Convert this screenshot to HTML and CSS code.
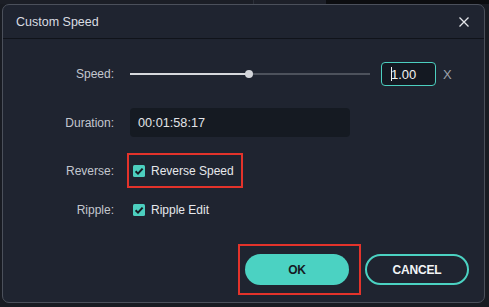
FILE: index.html
```html
<!DOCTYPE html>
<html>
<head>
<meta charset="utf-8">
<link rel="stylesheet" href="styles.css">
</head>
<body>
<div class="backdrop">
  <div class="topstrip"><span class="seg-a"></span><span class="seg-b"></span><span class="seg-c"></span></div>
  <div class="dialog">
    <div class="titlebar">
      <span class="title">Custom Speed</span>
      <svg class="close" width="10" height="10" viewBox="0 0 10 10"><path d="M0.5 0.5 L9.5 9.5 M9.5 0.5 L0.5 9.5" stroke="#e4e6ea" stroke-width="1.3" fill="none"/></svg>
    </div>
    <div class="body">
      <div class="row row-speed">
        <div class="label">Speed:</div>
        <div class="ctrl">
          <div class="slider">
            <div class="fill" style="width:49.6%"></div>
            <div class="knob" style="left:49.6%"></div>
          </div>
          <div class="num"><span class="caret"></span>1.00</div>
          <span class="mult">X</span>
        </div>
      </div>
      <div class="row row-dur">
        <div class="label">Duration:</div>
        <div class="ctrl">
          <div class="dur">00:01:58:17</div>
        </div>
      </div>
      <div class="row row-rev">
        <div class="label">Reverse:</div>
        <div class="ctrl ctrl-rev">
          <div class="hl hl-rev">
            <span class="check"><svg width="12" height="12" viewBox="0 0 12 12"><path d="M2.6 6.2 L5 8.6 L9.6 3.6" stroke="#151a22" stroke-width="2" fill="none"/></svg></span>
            <span class="cbtext">Reverse Speed</span>
          </div>
        </div>
      </div>
      <div class="row row-rip">
        <div class="label">Ripple:</div>
        <div class="ctrl ctrl-rip">
          <span class="check"><svg width="12" height="12" viewBox="0 0 12 12"><path d="M2.6 6.2 L5 8.6 L9.6 3.6" stroke="#151a22" stroke-width="2" fill="none"/></svg></span>
          <span class="cbtext">Ripple Edit</span>
        </div>
      </div>
      <div class="footer">
        <div class="hl hl-ok"><button class="btn btn-ok">OK</button></div>
        <button class="btn btn-cancel">CANCEL</button>
      </div>
    </div>
  </div>
</div>
</body>
</html>
```

FILE: styles.css
```css
* { box-sizing: border-box; }
html, body { margin: 0; padding: 0; }
body {
  width: 489px;
  height: 307px;
  overflow: hidden;
  background: #181b22;
  font-family: "Liberation Sans", Arial, sans-serif;
  font-size: 12px;
}
.backdrop { position: relative; width: 489px; height: 307px; }
.topstrip {
  display: flex;
  height: 4px;
}
.seg-a { width: 253px; background: #1b1e26; }
.seg-b { width: 73px; background: #1d2029; border-left: 1px solid #2c3039; }
.seg-c { flex: 1; background: #0c0d10; }
.dialog {
  margin-left: 2px;
  width: 483px;
  height: 299px;
  background: #1f2430;
  border: 1px solid #4b505b;
  border-radius: 7px;
  display: flex;
  flex-direction: column;
}
.titlebar {
  height: 34px;
  flex: none;
  display: flex;
  align-items: center;
  justify-content: space-between;
  padding: 0 15px 0 13px;
  border-bottom: 1px solid #10131a;
}
.title { color: #d9dce2; font-size: 12.5px; }
.close { display: block; }
.body {
  padding-top: 23px;
  display: flex;
  flex-direction: column;
}
.row {
  display: flex;
  align-items: center;
}
.label {
  width: 112px;
  flex: none;
  text-align: right;
  color: #c3c7cf;
  padding-right: 1px;
}
.ctrl {
  margin-left: 15px;
  display: flex;
  align-items: center;
}
.row-speed { height: 24px; }
.slider {
  position: relative;
  width: 240px;
  height: 2px;
  background: #4d525c;
  margin-right: 11px;
}
.fill {
  height: 2px;
  background: #d6d8dc;
}
.knob {
  position: absolute;
  top: -3px;
  width: 8px;
  height: 8px;
  margin-left: -4px;
  border-radius: 50%;
  background: #d3d5da;
}
.num {
  width: 55px;
  height: 24px;
  border: 1px solid #4ccfbf;
  border-radius: 4px;
  background: #141922;
  color: #f2f2f2;
  font-size: 13px;
  display: flex;
  align-items: center;
  padding-left: 9px;
}
.caret {
  display: inline-block;
  width: 1px;
  height: 14px;
  background: #f2f2f2;
  margin-right: -1px;
}
.mult {
  margin-left: 7px;
  color: #9ca1aa;
  font-size: 13px;
}
.row-dur { height: 29px; margin-top: 22px; }
.dur {
  width: 220px;
  height: 29px;
  background: #151a22;
  border-radius: 4px;
  color: #e2e4e8;
  font-size: 12.7px;
  display: flex;
  align-items: center;
  padding-left: 8px;
}
.row-rev { height: 35px; margin-top: 16px; }
.ctrl-rev { margin-left: 12px; }
.hl {
  border: 2px solid #e3332b;
  display: flex;
  align-items: center;
}
.hl-rev {
  height: 35px;
  width: 116px;
  padding-left: 4px;
}
.check {
  width: 12px;
  height: 12px;
  border-radius: 1.5px;
  background: #4ccfbf;
  display: block;
  flex: none;
}
.check svg { display: block; }
.cbtext {
  margin-left: 6px;
  color: #e6e8ec;
}
.row-rip { height: 20px; margin-top: 12px; }
.ctrl-rip { margin-left: 18px; }
.footer {
  margin-top: 24px;
  display: flex;
  justify-content: flex-end;
  align-items: center;
  padding-right: 15px;
}
.hl-ok {
  padding: 8px 10px 8px 5px;
  margin-right: 4px;
}
.btn {
  width: 104px;
  height: 31px;
  border-radius: 16px;
  font-family: "Liberation Sans", Arial, sans-serif;
  font-weight: bold;
  font-size: 12px;
  letter-spacing: -0.2px;
  padding: 0;
}
.btn-ok {
  background: #4bd2c2;
  border: none;
  color: #151a22;
}
.btn-cancel {
  background: transparent;
  border: 2px solid #4bd2c2;
  color: #f2f4f6;
}
```
